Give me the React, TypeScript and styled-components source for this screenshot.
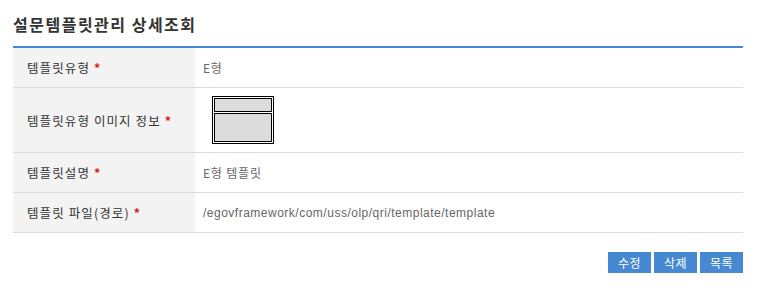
import React from "react";
import styled, { createGlobalStyle } from "styled-components";

const Global = createGlobalStyle`
  html, body { margin: 0; padding: 0; background: #fff; }
  body { font-family: "Noto Sans CJK KR", "Noto Sans", sans-serif; }
`;

const Page = styled.div`
  padding: 0 19px 0 13px;
`;

const Title = styled.h2`
  margin: 0;
  height: 46px;
  display: flex;
  align-items: center;
  padding-top: 2px;
  box-sizing: border-box;
  font-size: 16px;
  font-weight: 700;
  color: #333;
  letter-spacing: 1.5px;
`;

const Table = styled.div`
  border-top: 2px solid #4688d2;
  display: grid;
  grid-template-columns: 182px 1fr;
`;

const Label = styled.div<{ $h: number }>`
  height: ${(p) => p.$h}px;
  background: #f3f3f3;
  border-bottom: 1px solid #dadada;
  display: flex;
  align-items: center;
  padding-left: 14px;
  font-size: 12.5px;
  color: #333;
  letter-spacing: 1.1px;
`;

const Value = styled.div<{ $h: number }>`
  height: ${(p) => p.$h}px;
  border-bottom: 1px solid #dadada;
  display: flex;
  align-items: center;
  padding-left: 8px;
  font-size: 12px;
  color: #666;
  letter-spacing: 0.8px;
`;

const Mono = styled.span`
  font-family: "Liberation Sans", "Noto Sans CJK KR", sans-serif;
  font-size: 12px;
  color: #666;
  letter-spacing: 0.5px;
`;

const Req = styled.span`
  color: #e02020;
  margin-left: 4px;
  font-weight: 700;
`;

const ImgWrap = styled.div`
  margin-left: 9px;
  display: flex;
`;

const Buttons = styled.div`
  display: flex;
  justify-content: flex-end;
  gap: 3px;
  margin-top: 19px;
`;

const Btn = styled.button`
  width: 43px;
  height: 21px;
  border: 0;
  padding: 0;
  background: #4688d2;
  color: #fff;
  font-family: "Noto Sans CJK KR", sans-serif;
  font-size: 12px;
  letter-spacing: 0.5px;
  cursor: pointer;
`;

const TemplateImage = () => (
  <svg width="62" height="48" viewBox="0 0 62 48">
    <rect x="0.5" y="0.5" width="61" height="47" fill="#fff" stroke="#000" />
    <rect x="2.5" y="2.5" width="57" height="13" fill="#dcdcdc" stroke="#000" />
    <rect x="2.5" y="17.5" width="57" height="28" fill="#dcdcdc" stroke="#000" />
  </svg>
);

export default function App() {
  const rows: { label: string; h: number; value: React.ReactNode }[] = [
    { label: "템플릿유형", h: 39, value: "E형" },
    { label: "템플릿유형 이미지 정보", h: 64, value: <ImgWrap><TemplateImage /></ImgWrap> },
    { label: "템플릿설명", h: 39, value: "E형 템플릿" },
    {
      label: "템플릿 파일(경로)",
      h: 39,
      value: <Mono>/egovframework/com/uss/olp/qri/template/template</Mono>,
    },
  ];
  return (
    <Page>
      <Global />
      <Title>설문템플릿관리 상세조회</Title>
      <Table>
        {rows.map((r) => (
          <React.Fragment key={r.label}>
            <Label $h={r.h}>
              {r.label}
              <Req>*</Req>
            </Label>
            <Value $h={r.h}>{r.value}</Value>
          </React.Fragment>
        ))}
      </Table>
      <Buttons>
        <Btn>수정</Btn>
        <Btn>삭제</Btn>
        <Btn>목록</Btn>
      </Buttons>
    </Page>
  );
}
